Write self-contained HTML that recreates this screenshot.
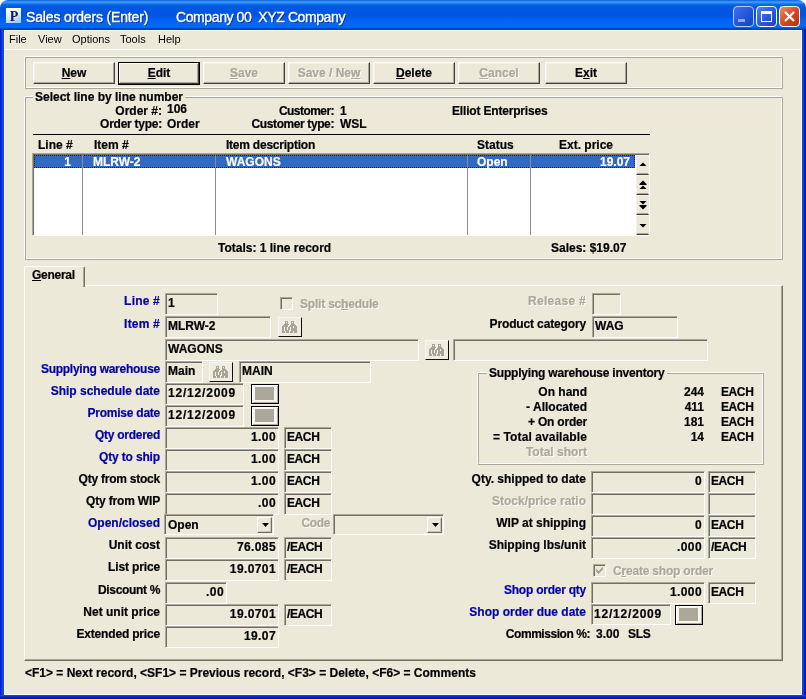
<!DOCTYPE html>
<html><head><meta charset="utf-8"><title>Sales orders (Enter)</title>
<style>
*{box-sizing:border-box;margin:0;padding:0}
html,body{width:806px;height:699px;overflow:hidden;background:#ECE9D8}
body{position:relative;font:bold 12px "Liberation Sans",sans-serif;color:#000;-webkit-text-stroke:.2px}
.a{position:absolute;white-space:nowrap}
#title{left:0;top:0;width:806px;height:30px;background:linear-gradient(#0550c8 0,#2f8af8 1px,#3a94ff 2.5px,#0a6ae6 4.5px,#0058e0 7px,#0055e0 15px,#0463f5 21px,#0568fa 27px,#0448d0 28.5px,#0338b0 30px);border-radius:8px 8px 0 0}
#bl{left:0;top:29px;width:4px;height:670px;background:linear-gradient(90deg,#0019cf 0,#0a34dc 45%,#1a50e8 65%,#0838c8 100%)}
#br{left:802px;top:29px;width:4px;height:670px;background:linear-gradient(90deg,#0838c8 0,#1a4ae8 30%,#0020b0 65%,#00138c 100%)}
#bb{left:0;top:695px;width:806px;height:4px;background:linear-gradient(#1a4ae8 0,#0830d0 35%,#0020b0 65%,#00138c 100%)}
.tt{-webkit-text-stroke:.35px #fff;color:#fff;font:14px "Liberation Sans",sans-serif;top:9px;letter-spacing:-.15px;text-shadow:1px 1px 0 #0a2a8a}
.menu{font:11px "Liberation Sans",sans-serif;top:33px;-webkit-text-stroke:0}
.tb{width:21px;height:21px;top:6px;border:1px solid #fff;border-radius:4px;background:linear-gradient(135deg,#4d86f0,#2457d6 60%,#1c45b8)}.tb svg{position:absolute;left:0;top:0}
.btn{top:62px;height:22px;background:#ECE9D8;border:1px solid;border-color:#fff #404040 #404040 #fff;box-shadow:inset -1px -1px 0 #ACA899, inset 1px 1px 0 #F4F2E8;text-align:center;line-height:20px}
.btn.dis{color:#ACA899;text-shadow:1px 1px 0 #fff}
.etch{border:1px solid #ACA899;box-shadow:-1px -1px 0 #fff,inset -1px -1px 0 #fff}
.lbl{text-align:right}
.blue{color:#0202A8}
.gray{color:#ACA899;text-shadow:1px 1px 0 #fff}
.fld{height:21px;background:#ECE9D8;border:1px solid;border-color:#ACA899 #fff #fff #ACA899;box-shadow:inset 1px 1px 0 #716F64;line-height:19px;padding:0 2px 0 2px}
.r{text-align:right;letter-spacing:.4px}.dt{letter-spacing:.8px}
u{text-decoration:underline}

.w{color:#fff}
.sb{width:13px;height:20px;background:#ECE9D8;border:1px solid;border-color:#f4f2ea #ECE9D8 #404040 #f4f2ea;box-shadow:inset 0 -1px 0 #ACA899}
.sb svg,.cb svg{position:absolute;left:-1px;top:-1px}
.cb{width:15px;height:16px;background:#ECE9D8;border:1px solid;border-color:#fff #716F64 #716F64 #fff;box-shadow:inset -1px -1px 0 #C8C5B4}
.bb{width:24px;height:20px;background:#EFEDE2;border:1px solid;border-color:#F8F7F2 #111 #111 #F8F7F2}
.bb svg{position:absolute;left:3px;top:3px}
.db{width:28px;height:20px;border:1px solid #000;background:#F6F5EE;box-shadow:inset 1px 1px 0 #fff,inset -1px -1px 0 #ACA899}
.db i{position:absolute;left:3px;top:2px;width:19px;height:13px;background:#ACA899}
.chk{width:13px;height:13px;background:#ECE9D8;border:1px solid;border-color:#ACA899 #fff #fff #ACA899;box-shadow:inset 1px 1px 0 #716F64}
.chk svg{position:absolute;left:2px;top:2px}
</style></head><body><div style="position:absolute;left:0;top:0;width:806px;height:699px;will-change:transform">
<div class="a" style="left:0;top:0;width:806px;height:10px;background:#fff"></div>
<div class="a" id="title"></div>
<div class="a" id="bl"></div><div class="a" id="br"></div><div class="a" id="bb"></div>
<div class="a" style="left:6px;top:8px;width:15px;height:15px;background:linear-gradient(160deg,#fff 20%,#cfe0fb 60%,#9cc0f5);color:#0a1a5a;font:bold 14px 'Liberation Serif',serif;line-height:17px;text-align:center;padding-left:1px;-webkit-text-stroke:0">P</div>
<div class="a tt" style="left:26px">Sales orders (Enter)</div>
<div class="a tt" style="left:176px;letter-spacing:-.4px">Company 00&nbsp; XYZ Company</div>
<div class="a tb" style="left:733px;border-color:#b9cdf6;background:linear-gradient(135deg,#3f73ea,#1f52d8 60%,#1747c6)"><svg width="19" height="19"><rect x="4" y="12" width="7" height="3" fill="#8fa9ec"/></svg></div>
<div class="a tb" style="left:756px"><svg width="19" height="19"><rect x="4.5" y="5.5" width="10" height="9" fill="none" stroke="#fff" stroke-width="1"/><rect x="4" y="4" width="11" height="3" fill="#fff"/></svg></div>
<div class="a tb" style="left:779px;background:linear-gradient(135deg,#ea8a6e,#d6451f 55%,#b3300e)"><svg width="19" height="19"><path d="M5 5 L14 14 M14 5 L5 14" stroke="#fff" stroke-width="2.2" stroke-linecap="butt"/></svg></div>
<div class="a" style="left:4px;top:30px;width:798px;height:665px;border:1px solid #fbfbf8"></div><div class="a" style="left:4px;top:49px;width:798px;height:1px;background:#fff"></div>
<div class="a menu" style="left:9px">File</div>
<div class="a menu" style="left:38px">View</div>
<div class="a menu" style="left:72px">Options</div>
<div class="a menu" style="left:120px">Tools</div>
<div class="a menu" style="left:158px">Help</div>

<!-- toolbar -->
<div class="a etch" style="left:25px;top:57px;width:758px;height:32px"></div>
<div class="a btn" style="left:33px;width:82px"><u>N</u>ew</div>
<div class="a btn" style="left:118px;width:82px;height:23px;border-color:#000;box-shadow:inset -1px -1px 0 #404040,inset 1px 1px 0 #fff,inset -2px -2px 0 #ACA899"><u>E</u>dit</div>
<div class="a btn dis" style="left:203px;width:82px"><u>S</u>ave</div>
<div class="a btn dis" style="left:288px;width:82px">Save / Ne<u>w</u></div>
<div class="a btn" style="left:373px;width:82px"><u>D</u>elete</div>
<div class="a btn dis" style="left:458px;width:82px"><u>C</u>ancel</div>
<div class="a btn" style="left:545px;width:82px">E<u>x</u>it</div>

<!-- group box -->
<div class="a etch" style="left:25px;top:97px;width:758px;height:163px"></div>
<div class="a" style="left:33px;top:90px;background:#ECE9D8;padding:0 2px">Select line by line number</div>

<div class="a lbl " style="right:644px;top:104px;">Order #:</div>
<div class="a " style="left:167px;top:102px;">106</div>
<div class="a lbl " style="right:644px;top:117px;letter-spacing:-0.25px">Order type:</div>
<div class="a " style="left:167px;top:117px;">Order</div>
<div class="a lbl " style="right:472px;top:104px;letter-spacing:-0.55px">Customer:</div>
<div class="a " style="left:340px;top:104px;">1</div>
<div class="a lbl " style="right:472px;top:117px;letter-spacing:-0.4px">Customer type:</div>
<div class="a " style="left:340px;top:117px;">WSL</div>
<div class="a " style="left:452px;top:104px;letter-spacing:-0.18px">Elliot Enterprises</div>
<div class="a" style="left:33px;top:134px;width:617px;height:1px;background:#000"></div>
<div class="a " style="left:38px;top:138px;">Line #</div>
<div class="a " style="left:94px;top:138px;">Item #</div>
<div class="a " style="left:226px;top:138px;letter-spacing:-0.23px">Item description</div>
<div class="a " style="left:477px;top:138px;">Status</div>
<div class="a " style="left:559px;top:138px;">Ext. price</div>
<div class="a" style="left:32px;top:153px;width:618px;height:83px;background:#fff;border:1px solid;border-color:#ACA899 #fff #fff #ACA899;box-shadow:inset 1px 1px 0 #716F64"></div>
<div class="a" style="left:34px;top:155px;width:601px;height:13px;background:#316AC5;outline:1px dotted #2a2210;outline-offset:-1px"></div>
<div class="a" style="left:82px;top:155px;width:1px;height:80px;background:#8e8e86"></div>
<div class="a" style="left:215px;top:155px;width:1px;height:80px;background:#8e8e86"></div>
<div class="a" style="left:467px;top:155px;width:1px;height:80px;background:#8e8e86"></div>
<div class="a" style="left:530px;top:155px;width:1px;height:80px;background:#8e8e86"></div>
<div class="a lbl w" style="right:735px;top:155px;">1</div>
<div class="a w" style="left:93px;top:155px;">MLRW-2</div>
<div class="a w" style="left:226px;top:155px;">WAGONS</div>
<div class="a w" style="left:477px;top:155px;">Open</div>
<div class="a lbl w" style="right:176px;top:155px;">19.07</div>
<div class="a sb" style="left:636px;top:155px"><svg width="14" height="20" viewBox="0 0 14 20"><polygon points="3.5,11 10.5,11 7,7.5"/></svg></div>
<div class="a sb" style="left:636px;top:175px"><svg width="14" height="20" viewBox="0 0 14 20"><polygon points="3.5,9 10.5,9 7,5.5"/><polygon points="3.5,14 10.5,14 7,10.5"/><rect x="3.5" y="9" width="7" height="1"/></svg></div>
<div class="a sb" style="left:636px;top:195px"><svg width="14" height="20" viewBox="0 0 14 20"><polygon points="3.5,6 10.5,6 7,9.5"/><polygon points="3.5,11 10.5,11 7,14.5"/><rect x="3.5" y="10" width="7" height="1"/></svg></div>
<div class="a sb" style="left:636px;top:215px"><svg width="14" height="20" viewBox="0 0 14 20"><polygon points="3.5,9 10.5,9 7,12.5"/></svg></div>
<div class="a " style="left:218px;top:241px;">Totals: 1 line record</div>
<div class="a " style="left:551px;top:241px;">Sales: $19.07</div>
<div class="a" style="left:24px;top:285px;width:759px;height:376px;border:1px solid;border-color:#fff #716F64 #716F64 #fff;box-shadow:inset -1px -1px 0 #ACA899"></div>
<div class="a" style="left:24px;top:266px;width:61px;height:21px;background:#ECE9D8;border:1px solid;border-color:#fff #716F64 transparent #fff;border-bottom:0;border-radius:2px 2px 0 0;box-shadow:inset -1px 0 0 #ACA899"></div>
<div class="a " style="left:32px;top:268px;letter-spacing:-0.27px"><u>G</u>eneral</div>
<div class="a lbl blue" style="right:646px;top:294px;letter-spacing:0.2px">Line #</div>
<div class="a fld" style="left:165px;top:293px;width:53px;height:22px">1</div>
<div class="a lbl blue" style="right:646px;top:317px;letter-spacing:0.2px">Item #</div>
<div class="a fld" style="left:165px;top:316px;width:106px;height:22px">MLRW-2</div>
<div class="a fld" style="left:165px;top:339px;width:254px;height:22px">WAGONS</div>
<div class="a lbl blue" style="right:646px;top:362px;letter-spacing:-0.26px">Supplying warehouse</div>
<div class="a fld" style="left:165px;top:361px;width:38px;height:22px">Main</div>
<div class="a fld" style="left:239px;top:361px;width:132px;height:22px">MAIN</div>
<div class="a lbl blue" style="right:646px;top:384px;">Ship schedule date</div>
<div class="a fld" style="left:165px;top:383px;width:79px;height:22px"><span class="dt">12/12/2009</span></div>
<div class="a lbl blue" style="right:646px;top:406px;letter-spacing:-0.24px">Promise date</div>
<div class="a fld" style="left:165px;top:405px;width:79px;height:22px"><span class="dt">12/12/2009</span></div>
<div class="a lbl blue" style="right:646px;top:428px;letter-spacing:-0.27px">Qty ordered</div>
<div class="a fld r" style="left:165px;top:427px;width:114px;height:22px">1.00</div>
<div class="a fld" style="left:284px;top:427px;width:48px;height:22px"><span style="letter-spacing:-.4px">EACH</span></div>
<div class="a lbl blue" style="right:646px;top:450px;letter-spacing:-0.15px">Qty to ship</div>
<div class="a fld r" style="left:165px;top:449px;width:114px;height:22px">1.00</div>
<div class="a fld" style="left:284px;top:449px;width:48px;height:22px"><span style="letter-spacing:-.4px">EACH</span></div>
<div class="a lbl " style="right:646px;top:472px;letter-spacing:-0.23px">Qty from stock</div>
<div class="a fld r" style="left:165px;top:471px;width:114px;height:22px">1.00</div>
<div class="a fld" style="left:284px;top:471px;width:48px;height:22px"><span style="letter-spacing:-.4px">EACH</span></div>
<div class="a lbl " style="right:646px;top:494px;letter-spacing:-0.17px">Qty from WIP</div>
<div class="a fld r" style="left:165px;top:493px;width:114px;height:22px">.00</div>
<div class="a fld" style="left:284px;top:493px;width:48px;height:22px"><span style="letter-spacing:-.4px">EACH</span></div>
<div class="a lbl blue" style="right:646px;top:516px;">Open/closed</div>
<div class="a lbl " style="right:646px;top:538px;">Unit cost</div>
<div class="a fld r" style="left:165px;top:537px;width:114px;height:22px">76.085</div>
<div class="a fld" style="left:284px;top:537px;width:48px;height:22px"><span style="letter-spacing:-.4px">/EACH</span></div>
<div class="a lbl " style="right:646px;top:560px;letter-spacing:-0.14px">List price</div>
<div class="a fld r" style="left:165px;top:559px;width:114px;height:22px">19.0701</div>
<div class="a fld" style="left:284px;top:559px;width:48px;height:22px"><span style="letter-spacing:-.4px">/EACH</span></div>
<div class="a lbl " style="right:646px;top:583px;letter-spacing:-0.33px">Discount %</div>
<div class="a fld r" style="left:165px;top:582px;width:62px;height:22px">.00</div>
<div class="a lbl " style="right:646px;top:605px;">Net unit price</div>
<div class="a fld r" style="left:165px;top:604px;width:114px;height:22px">19.0701</div>
<div class="a fld" style="left:284px;top:604px;width:48px;height:22px"><span style="letter-spacing:-.4px">/EACH</span></div>
<div class="a lbl " style="right:646px;top:627px;letter-spacing:-0.18px">Extended price</div>
<div class="a fld r" style="left:165px;top:626px;width:114px;height:22px">19.07</div>
<div class="a fld" style="left:164px;top:514px;width:110px;height:21px;line-height:21px;padding-left:3px">Open</div>
<div class="a cb" style="left:257px;top:517px"><svg width="14" height="16" viewBox="0 0 14 16"><polygon points="5,6 12,6 8.5,10"/></svg></div>
<div class="a lbl gray" style="right:476px;top:516px;letter-spacing:-.35px">Code</div>
<div class="a fld" style="left:333px;top:514px;width:111px;height:21px"></div>
<div class="a cb" style="left:427px;top:517px"><svg width="14" height="16" viewBox="0 0 14 16"><polygon points="5,6 12,6 8.5,10"/></svg></div>
<div class="a bb" style="left:278px;top:317px"><svg width="15" height="12" viewBox="0 0 15 12" shape-rendering="crispEdges"><g fill="#A9A596"><path d="M3 0H6V3L7 4V12H4V10H3V12H0V6L2 3H3Z"/><path d="M12 0H9V3L8 4V12H11V10H12V12H15V6L13 3H12Z"/><rect x="6" y="5" width="3" height="4"/></g><g fill="#F4F2EA"><rect x="4" y="1" width="1" height="1"/><rect x="10" y="1" width="1" height="1"/><rect x="2" y="6" width="1" height="4"/><rect x="6" y="4" width="1" height="2"/><rect x="8" y="6" width="1" height="4"/><rect x="5" y="6" width="1" height="3"/><rect x="11" y="5" width="1" height="2"/></g></svg></div>
<div class="a bb" style="left:209px;top:362px"><svg width="15" height="12" viewBox="0 0 15 12" shape-rendering="crispEdges"><g fill="#A9A596"><path d="M3 0H6V3L7 4V12H4V10H3V12H0V6L2 3H3Z"/><path d="M12 0H9V3L8 4V12H11V10H12V12H15V6L13 3H12Z"/><rect x="6" y="5" width="3" height="4"/></g><g fill="#F4F2EA"><rect x="4" y="1" width="1" height="1"/><rect x="10" y="1" width="1" height="1"/><rect x="2" y="6" width="1" height="4"/><rect x="6" y="4" width="1" height="2"/><rect x="8" y="6" width="1" height="4"/><rect x="5" y="6" width="1" height="3"/><rect x="11" y="5" width="1" height="2"/></g></svg></div>
<div class="a bb" style="left:425px;top:340px"><svg width="15" height="12" viewBox="0 0 15 12" shape-rendering="crispEdges"><g fill="#A9A596"><path d="M3 0H6V3L7 4V12H4V10H3V12H0V6L2 3H3Z"/><path d="M12 0H9V3L8 4V12H11V10H12V12H15V6L13 3H12Z"/><rect x="6" y="5" width="3" height="4"/></g><g fill="#F4F2EA"><rect x="4" y="1" width="1" height="1"/><rect x="10" y="1" width="1" height="1"/><rect x="2" y="6" width="1" height="4"/><rect x="6" y="4" width="1" height="2"/><rect x="8" y="6" width="1" height="4"/><rect x="5" y="6" width="1" height="3"/><rect x="11" y="5" width="1" height="2"/></g></svg></div>
<div class="a db" style="left:251px;top:384px"><i></i></div>
<div class="a db" style="left:251px;top:406px"><i></i></div>
<div class="a db" style="left:675px;top:605px"><i></i></div>
<div class="a chk" style="left:280px;top:297px"></div>
<div class="a gray" style="left:300px;top:297px;letter-spacing:-0.2px">Split sc<u>h</u>edule</div>
<div class="a chk" style="left:593px;top:564px"><svg width="7" height="7" viewBox="0 0 7 7" shape-rendering="crispEdges" fill="#ACA899"><rect x="0" y="2" width="1" height="3"/><rect x="1" y="3" width="1" height="3"/><rect x="2" y="4" width="1" height="3"/><rect x="3" y="3" width="1" height="3"/><rect x="4" y="2" width="1" height="3"/><rect x="5" y="1" width="1" height="3"/><rect x="6" y="0" width="1" height="3"/></svg></div>
<div class="a gray" style="left:613px;top:564px;letter-spacing:-0.2px">C<u>r</u>eate shop order</div>
<div class="a lbl gray" style="right:220px;top:294px;letter-spacing:0.29px">Release #</div>
<div class="a fld" style="left:592px;top:293px;width:29px;height:22px"></div>
<div class="a lbl " style="right:220px;top:317px;letter-spacing:-0.14px">Product category</div>
<div class="a fld" style="left:592px;top:316px;width:86px;height:22px">WAG</div>
<div class="a fld" style="left:453px;top:339px;width:255px;height:22px"></div>
<div class="a etch" style="left:478px;top:373px;width:286px;height:92px"></div>
<div class="a" style="left:487px;top:366px;background:#ECE9D8;padding:0 2px;letter-spacing:-.2px">Supplying warehouse inventory</div>
<div class="a lbl " style="right:219px;top:385px;">On hand</div>
<div class="a lbl " style="right:102px;top:385px;">244</div>
<div class="a " style="left:721px;top:385px;"><span style="letter-spacing:-.4px">EACH</span></div>
<div class="a lbl " style="right:219px;top:400px;">- Allocated</div>
<div class="a lbl " style="right:102px;top:400px;">411</div>
<div class="a " style="left:721px;top:400px;"><span style="letter-spacing:-.4px">EACH</span></div>
<div class="a lbl " style="right:219px;top:415px;letter-spacing:-0.2px">+ On order</div>
<div class="a lbl " style="right:102px;top:415px;">181</div>
<div class="a " style="left:721px;top:415px;"><span style="letter-spacing:-.4px">EACH</span></div>
<div class="a lbl " style="right:219px;top:430px;letter-spacing:0.11px">= Total available</div>
<div class="a lbl " style="right:102px;top:430px;">14</div>
<div class="a " style="left:721px;top:430px;"><span style="letter-spacing:-.4px">EACH</span></div>
<div class="a lbl gray" style="right:219px;top:445px;">Total short</div>
<div class="a lbl " style="right:220px;top:472px;">Qty. shipped to date</div>
<div class="a fld r" style="left:591px;top:471px;width:114px;height:22px">0</div>
<div class="a fld" style="left:708px;top:471px;width:48px;height:22px"><span style="letter-spacing:-.4px">EACH</span></div>
<div class="a lbl gray" style="right:220px;top:494px;">Stock/price ratio</div>
<div class="a fld" style="left:591px;top:493px;width:114px;height:22px"></div>
<div class="a fld" style="left:708px;top:493px;width:48px;height:22px"></div>
<div class="a lbl " style="right:220px;top:516px;">WIP at shipping</div>
<div class="a fld r" style="left:591px;top:515px;width:114px;height:22px">0</div>
<div class="a fld" style="left:708px;top:515px;width:48px;height:22px"><span style="letter-spacing:-.4px">EACH</span></div>
<div class="a lbl " style="right:220px;top:538px;">Shipping lbs/unit</div>
<div class="a fld r" style="left:591px;top:537px;width:114px;height:22px">.000</div>
<div class="a fld" style="left:708px;top:537px;width:48px;height:22px"><span style="letter-spacing:-.4px">/EACH</span></div>
<div class="a lbl blue" style="right:220px;top:583px;letter-spacing:-0.24px">Shop order qty</div>
<div class="a fld r" style="left:591px;top:582px;width:114px;height:22px">1.000</div>
<div class="a fld" style="left:708px;top:582px;width:48px;height:22px"><span style="letter-spacing:-.4px">EACH</span></div>
<div class="a lbl blue" style="right:220px;top:605px;">Shop order due date</div>
<div class="a fld" style="left:591px;top:604px;width:80px;height:21px"><span class="dt">12/12/2009</span></div>
<div class="a lbl" style="right:216px;top:627px;letter-spacing:-.45px">Commission %:</div><div class="a" style="left:596px;top:627px">3.00</div><div class="a" style="left:628px;top:627px;letter-spacing:-.3px">SLS</div>
<div class="a " style="left:25px;top:666px;">&lt;F1&gt; = Next record, &lt;SF1&gt; = Previous record, &lt;F3&gt; = Delete, &lt;F6&gt; = Comments</div>
</div></body></html>
